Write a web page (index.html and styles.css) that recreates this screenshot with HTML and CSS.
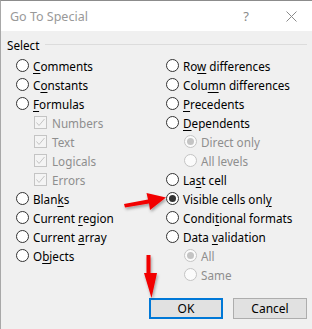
FILE: index.html
```html
<!DOCTYPE html>
<html>
<head>
<meta charset="utf-8">
<link rel="stylesheet" href="styles.css">
</head>
<body>
<div class="dialog">
  <div class="titlebar">
    <span class="title">Go To Special</span>
    <span class="help">?</span>
    <svg class="close" width="11" height="11" viewBox="0 0 11 11"><path d="M0.5 0.5 L10.5 10.5 M10.5 0.5 L0.5 10.5" stroke="#8a8a8a" stroke-width="1" fill="none"/></svg>
  </div>
  <div class="content">
    <div class="legend"><span>Select</span><div class="rule"></div></div>
    <div class="columns">
      <div class="col">
        <div class="row"><span class="radio"></span><span><u>C</u>omments</span></div>
        <div class="row"><span class="radio"></span><span>C<u>o</u>nstants</span></div>
        <div class="row"><span class="radio"></span><span><u>F</u>ormulas</span></div>
        <div class="row sub dis"><span class="check"><svg width="11" height="11" viewBox="0 0 11 11"><path d="M1.5 5.5 L4 8.5 L9.5 2" stroke="#c4c4c4" stroke-width="1" fill="none"/></svg></span><span>Numbers</span></div>
        <div class="row sub dis"><span class="check"><svg width="11" height="11" viewBox="0 0 11 11"><path d="M1.5 5.5 L4 8.5 L9.5 2" stroke="#c4c4c4" stroke-width="1" fill="none"/></svg></span><span>Text</span></div>
        <div class="row sub dis"><span class="check"><svg width="11" height="11" viewBox="0 0 11 11"><path d="M1.5 5.5 L4 8.5 L9.5 2" stroke="#c4c4c4" stroke-width="1" fill="none"/></svg></span><span>Logicals</span></div>
        <div class="row sub dis"><span class="check"><svg width="11" height="11" viewBox="0 0 11 11"><path d="M1.5 5.5 L4 8.5 L9.5 2" stroke="#c4c4c4" stroke-width="1" fill="none"/></svg></span><span>Errors</span></div>
        <div class="row"><span class="radio"></span><span>Blan<u>k</u>s</span></div>
        <div class="row"><span class="radio"></span><span>Current <u>r</u>egion</span></div>
        <div class="row"><span class="radio"></span><span>Current <u>a</u>rray</span></div>
        <div class="row"><span class="radio"></span><span>O<u>b</u>jects</span></div>
      </div>
      <div class="col">
        <div class="row"><span class="radio"></span><span>Ro<u>w</u> differences</span></div>
        <div class="row"><span class="radio"></span><span>Colu<u>m</u>n differences</span></div>
        <div class="row"><span class="radio"></span><span><u>P</u>recedents</span></div>
        <div class="row"><span class="radio"></span><span><u>D</u>ependents</span></div>
        <div class="row sub2 dis"><span class="radio on"></span><span>Direct only</span></div>
        <div class="row sub2 dis"><span class="radio"></span><span>All levels</span></div>
        <div class="row"><span class="radio"></span><span>La<u>s</u>t cell</span></div>
        <div class="row"><span class="radio on"></span><span>Visible cells onl<u>y</u></span></div>
        <div class="row"><span class="radio"></span><span>Condi<u>t</u>ional formats</span></div>
        <div class="row"><span class="radio"></span><span>Data <u>v</u>alidation</span></div>
        <div class="row sub2 dis"><span class="radio on"></span><span>All</span></div>
        <div class="row sub2 dis"><span class="radio"></span><span>Same</span></div>
      </div>
    </div>
    <div class="buttons">
      <button class="btn default">OK</button>
      <button class="btn">Cancel</button>
    </div>
  </div>
  <svg class="arrows" width="312" height="329" viewBox="0 0 312 329">
    <defs>
      <filter id="sh" x="-50%" y="-50%" width="200%" height="200%">
        <feDropShadow dx="1" dy="2" stdDeviation="1.5" flood-color="#000" flood-opacity="0.35"/>
      </filter>
    </defs>
    <g filter="url(#sh)" fill="#f20000">
      <polygon points="124,204 148,199.5 146.5,193 166,197.5 150,210 149,203.5 125,207.5"/>
      <polygon points="146.5,255 150.5,255 150.5,273 157,273 151.5,298 144,273 146.5,273"/>
    </g>
  </svg>
</div>
</body>
</html>
```

FILE: styles.css
```css
* { box-sizing: border-box; }
html, body { margin: 0; padding: 0; }
body {
  width: 312px;
  height: 329px;
  overflow: hidden;
  font-family: "Noto Sans", "Open Sans", sans-serif;
  font-size: 11.7px;
  color: #000;
}
.dialog {
  position: relative;
  width: 312px;
  height: 329px;
  background: #f0f0f0;
  border-top: 1px solid #8c8c8c;
  border-left: 1px solid #a8a8a8;
  display: flex;
  flex-direction: column;
}
.titlebar {
  height: 30px;
  background: #fff;
  display: flex;
  align-items: center;
  padding-left: 9px;
  flex-shrink: 0;
}
.title {
  color: #999;
  font-size: 12.5px;
  flex: 1;
}
.help {
  color: #8a8a8a;
  font-size: 13px;
  margin-right: 37px;
}
.close { margin-right: 15px; }
.content {
  display: flex;
  flex-direction: column;
  flex: 1;
}
.legend {
  display: flex;
  align-items: center;
  height: 16px;
  margin-top: 6px;
  padding-left: 6px;
  padding-right: 5px;
}
.legend span { margin-right: 6px; }
.rule {
  flex: 1;
  height: 1px;
  background: #dcdcdc;
  margin-top: -1px;
}
.columns {
  display: grid;
  grid-template-columns: 150px 1fr;
  padding-left: 15px;
  margin-top: 3px;
}
.col { display: flex; flex-direction: column; }
.row {
  height: 19px;
  display: flex;
  align-items: center;
  gap: 4px;
  white-space: nowrap;
}
.row u { text-decoration-thickness: 1px; text-underline-offset: 2px; }
.sub { padding-left: 18px; gap: 5px; }
.sub2 { padding-left: 18px; }
.dis { color: #8e8e8e; }
.radio {
  width: 13px;
  height: 13px;
  border: 1px solid #333;
  border-radius: 50%;
  background: #fff;
  flex-shrink: 0;
  display: flex;
  align-items: center;
  justify-content: center;
}
.radio.on::after {
  content: "";
  width: 7px;
  height: 7px;
  border-radius: 50%;
  background: #333;
}
.dis .radio { border-color: #c4c4c4; background: #fbfbfb; }
.dis .radio.on::after { background: #c4c4c4; }
.check {
  width: 13px;
  height: 13px;
  border: 1px solid #c4c4c4;
  background: #f4f4f4;
  flex-shrink: 0;
  display: flex;
}
.buttons {
  display: flex;
  justify-content: flex-end;
  gap: 10px;
  padding-right: 5px;
  margin-top: 14px;
}
.btn {
  width: 74px;
  height: 21px;
  background: #e1e1e1;
  border: 1px solid #adadad;
  font-family: "Noto Sans", "Open Sans", sans-serif;
  font-size: 12px;
  color: #000;
  padding: 0;
  margin: 0;
}
.btn.default { border: 2px solid #0078d7; }
.arrows {
  position: absolute;
  left: -1px;
  top: -1px;
  pointer-events: none;
}
```
